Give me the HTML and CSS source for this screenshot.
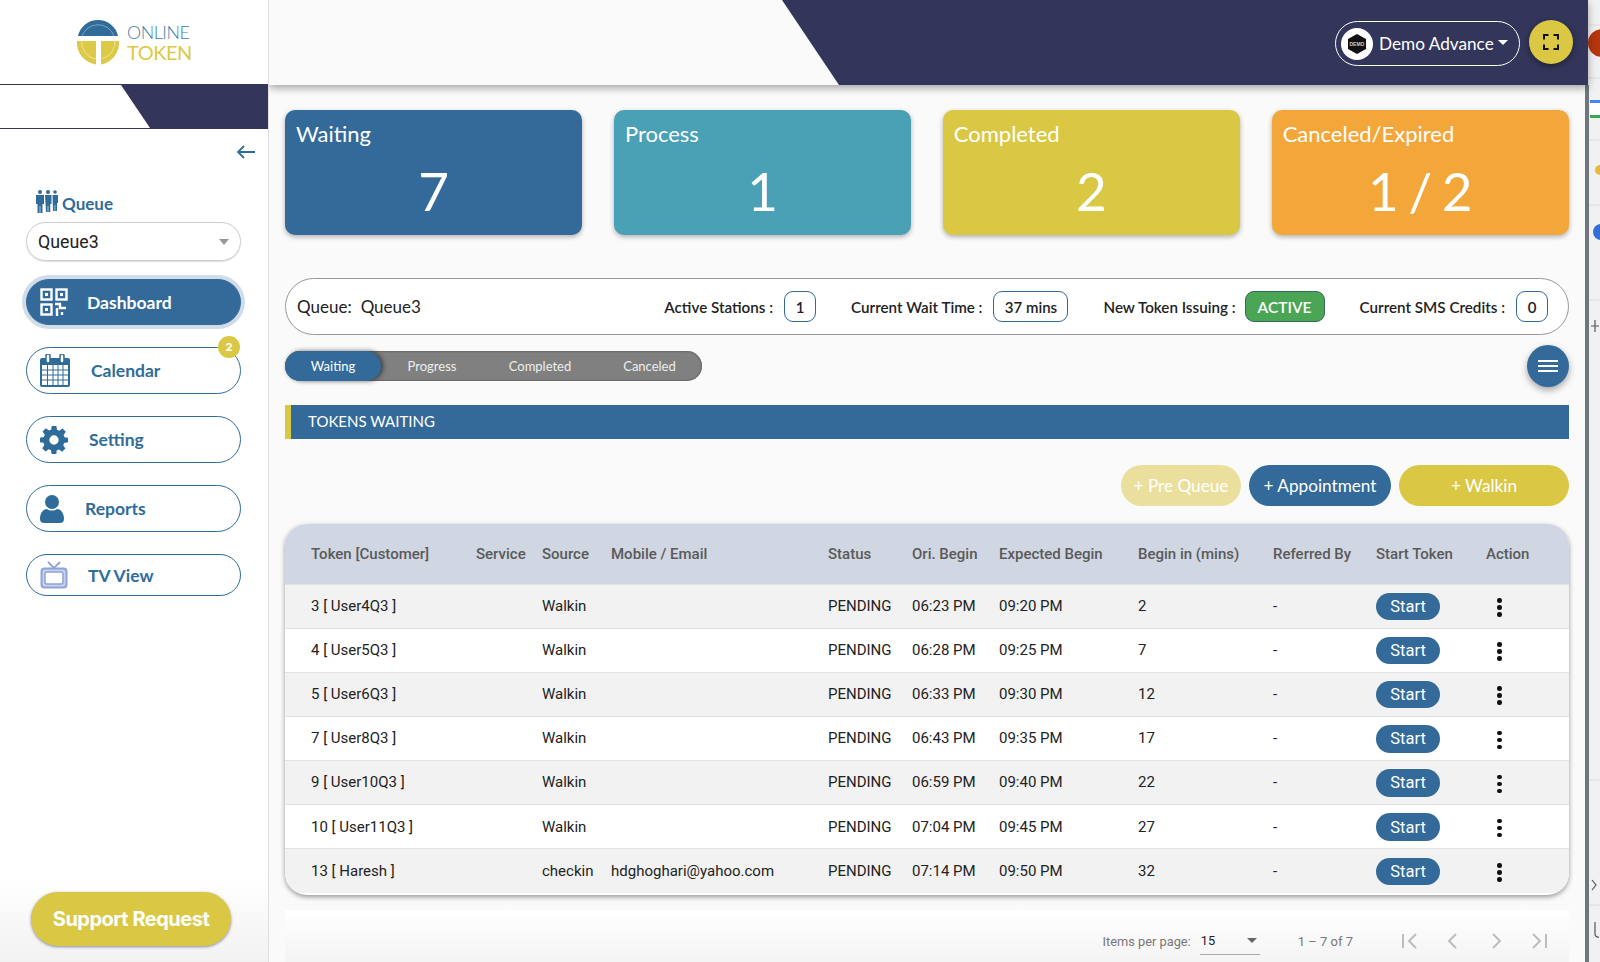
FILE: index.html
```html
<!DOCTYPE html>
<html lang="en">
<head>
<meta charset="utf-8">
<title>Online Token Dashboard</title>
<link rel="stylesheet" href="styles.css">
</head>
<body>
<aside class="sidebar">
  <div class="logo">
    <svg class="logo-mark" width="44" height="46" viewBox="0 0 44 46">
      <path d="M2 16 A20.5 20.5 0 0 1 42 16 Z" fill="#2f6c99"/>
      <path d="M6 16 A17 17 0 0 1 38 16" fill="none" stroke="#9dbcd2" stroke-width=".7"/>
      <path d="M1 21 H20 V44.5 A22 22 0 0 1 1 21 Z" fill="#dcc945"/>
      <path d="M25 21 H43 A22 22 0 0 1 25 44.5 Z" fill="#dcc945"/>
      <path d="M5.500 21 A17.500 17.500 0 0 0 20 39 M25 39 A17.500 17.500 0 0 0 39 21" fill="none" stroke="#f3eebd" stroke-width=".7"/>
    </svg>
    <div class="logo-text"><span class="logo-online">ONLINE</span><span class="logo-token">TOKEN</span></div>
  </div>
  <div class="strip"></div>
  <div class="collapse">
    <svg width="20" height="14" viewBox="0 0 20 14"><path d="M19 7H2M8 1 2 7l6 6" fill="none" stroke="#2f6c99" stroke-width="1.800"/></svg>
  </div>
  <div class="queue-label">
    <svg width="24" height="25" viewBox="0 0 24 25" fill="#2f6c99">
      <circle cx="5" cy="3" r="2"/><path d="M1 6h8v9H7.500v9H5.300v-7h-.6v7H2.500v-9H1z"/>
      <circle cx="13" cy="3" r="2"/><path d="M10 6h6.500v9h-1.200v8h-2v-6h-.6v6h-1.700z"/>
      <circle cx="20" cy="3" r="1.800"/><path d="M17.500 6H23v8h-1v8h-1.800v-6h-.5v6H18z"/>
    </svg>
    <span>Queue</span>
  </div>
  <div class="queue-select"><span>Queue3</span><i class="caret-grey"></i></div>
  <nav class="nav">
    <a class="nav-item active">
      <svg class="nav-icon qr" width="28" height="28" viewBox="0 0 28 28" fill="none" stroke="#fff" stroke-width="2.400">
        <rect x="1.500" y="1.500" width="10" height="10"/><rect x="16.500" y="1.500" width="10" height="10"/><rect x="1.500" y="16.500" width="10" height="10"/>
        <path d="M15 16h5v4h6M17 20v8M22 24v3" />
        <rect x="5" y="5" width="3" height="3" fill="#fff" stroke="none"/><rect x="20" y="5" width="3" height="3" fill="#fff" stroke="none"/><rect x="5" y="20" width="3" height="3" fill="#fff" stroke="none"/>
      </svg>
      <span class="nav-dash">Dashboard</span>
    </a>
    <a class="nav-item">
      <svg class="nav-icon cal" width="30" height="33" viewBox="0 0 30 33">
        <path d="M2 4h26a2 2 0 0 1 2 2v25a2 2 0 0 1-2 2H2a2 2 0 0 1-2-2V6a2 2 0 0 1 2-2z" fill="#2f6c99"/>
        <rect x="2" y="11" width="26" height="20" fill="#fff"/>
        <path d="M2 16h26M2 21h26M2 26h26M7.500 11v20M13 11v20M18 11v20M23 11v20" stroke="#2f6c99" stroke-width="1"/>
        <rect x="6" y="0" width="4" height="9" rx="2" fill="#fff" stroke="#2f6c99" stroke-width="1.500"/>
        <rect x="20" y="0" width="4" height="9" rx="2" fill="#fff" stroke="#2f6c99" stroke-width="1.500"/>
      </svg>
      <span class="nav-cal">Calendar</span>
      <b class="badge">2</b>
    </a>
    <a class="nav-item">
      <svg class="nav-icon gear" width="28" height="28" viewBox="0 0 24 24">
        <path fill="#2f6c99" fill-rule="evenodd" d="M10 0h4l.6 3.300 1.900.8L19.300 2.200l2.800 2.800-1.900 2.800.8 1.900L24 10v4l-3.300.6-.8 1.900 1.900 2.800-2.800 2.800-2.800-1.900-1.900.8L14 24h-4l-.6-3.300-1.900-.8-2.800 1.900-2.800-2.800 1.900-2.800-.8-1.900L0 14v-4l3.300-.6.8-1.900L2.200 4.700 5 1.900l2.800 1.900 1.900-.8zM12 8a4 4 0 1 0 0 8 4 4 0 0 0 0-8z"/>
      </svg>
      <span class="nav-set">Setting</span>
    </a>
    <a class="nav-item">
      <svg class="nav-icon user" width="24" height="28" viewBox="0 0 24 28" fill="#2f6c99">
        <circle cx="12" cy="7" r="7"/><path d="M0 24c0-7 4-10 7-10 1.500 1 3 1.500 5 1.500s3.500-.5 5-1.500c3 0 7 3 7 10 0 2.500-1.500 4-4 4H4c-2.500 0-4-1.500-4-4z"/>
      </svg>
      <span class="nav-rep">Reports</span>
    </a>
    <a class="nav-item short">
      <svg class="nav-icon tv" width="28" height="28" viewBox="0 0 28 28" fill="none" stroke="#8ea3d6">
        <rect x="1.500" y="7.500" width="25" height="19" rx="3" stroke-width="2" fill="#c7d2ec"/>
        <rect x="5" y="11" width="18" height="12" rx="2" fill="#fff" stroke-width="1.500"/>
        <path d="M8 1l6 6 6-6" stroke-width="1.800"/>
      </svg>
      <span class="nav-tv">TV View</span>
    </a>
  </nav>
  <button class="support">Support Request</button>
</aside>

<main class="main">
  <header class="topbar">
    <div class="account">
      <svg class="avatar" width="32" height="32" viewBox="0 0 32 32">
        <circle cx="16" cy="16" r="16" fill="#fff"/>
        <path d="M16 6l9 5v10l-9 5-9-5V11z" fill="#111"/>
        <text x="16" y="18" text-anchor="middle" class="avatar-text">DEMO</text>
      </svg>
      <span>Demo Advance</span>
      <i class="caret-white"></i>
    </div>
    <button class="fullscreen" aria-label="Fullscreen">
      <svg width="16" height="16" viewBox="0 0 16 16" fill="none" stroke="#111" stroke-width="2"><path d="M1 5.500V1h4.500M10.500 1H15v4.500M15 10.500V15h-4.500M5.500 15H1v-4.500"/></svg>
    </button>
  </header>

  <div class="content">
    <section class="cards">
      <div class="card c-blue"><div class="card-title">Waiting</div><div class="card-num">7</div></div>
      <div class="card c-teal"><div class="card-title">Process</div><div class="card-num">1</div></div>
      <div class="card c-yellow"><div class="card-title">Completed</div><div class="card-num">2</div></div>
      <div class="card c-orange"><div class="card-title">Canceled/Expired</div><div class="card-num">1 / 2</div></div>
    </section>

    <section class="info">
      <div class="info-queue"><span>Queue:</span><span>Queue3</span></div>
      <div class="info-item first"><label>Active Stations :</label><span class="box w-sm">1</span></div>
      <div class="info-item"><label>Current Wait Time :</label><span class="box w-md">37 mins</span></div>
      <div class="info-item"><label>New Token Issuing :</label><span class="status-active">ACTIVE</span></div>
      <div class="info-item"><label>Current SMS Credits :</label><span class="box w-sm">0</span></div>
    </section>

    <div class="tab-row">
      <div class="tabs">
        <span class="tab tab-1 on">Waiting</span>
        <span class="tab tab-2">Progress</span>
        <span class="tab tab-3">Completed</span>
        <span class="tab tab-4">Canceled</span>
      </div>
      <button class="fab" aria-label="Menu"><i></i><i></i><i></i></button>
    </div>

    <h2 class="section-title">TOKENS WAITING</h2>

    <div class="actions">
      <button class="act act-pre">+ Pre Queue</button>
      <button class="act act-app">+ Appointment</button>
      <button class="act act-walk">+ Walkin</button>
    </div>

    <div class="table-wrap">
      <table class="tokens">
        <thead>
          <tr><th>Token [Customer]</th><th>Service</th><th>Source</th><th>Mobile / Email</th><th>Status</th><th>Ori. Begin</th><th>Expected Begin</th><th>Begin in (mins)</th><th>Referred By</th><th>Start Token</th><th>Action</th></tr>
        </thead>
        <tbody>
          <tr><td>3 [ User4Q3 ]</td><td></td><td>Walkin</td><td></td><td>PENDING</td><td>06:23 PM</td><td>09:20 PM</td><td>2</td><td>-</td><td><button class="start">Start</button></td><td><span class="dots"><i></i><i></i><i></i></span></td></tr>
          <tr><td>4 [ User5Q3 ]</td><td></td><td>Walkin</td><td></td><td>PENDING</td><td>06:28 PM</td><td>09:25 PM</td><td>7</td><td>-</td><td><button class="start">Start</button></td><td><span class="dots"><i></i><i></i><i></i></span></td></tr>
          <tr><td>5 [ User6Q3 ]</td><td></td><td>Walkin</td><td></td><td>PENDING</td><td>06:33 PM</td><td>09:30 PM</td><td>12</td><td>-</td><td><button class="start">Start</button></td><td><span class="dots"><i></i><i></i><i></i></span></td></tr>
          <tr><td>7 [ User8Q3 ]</td><td></td><td>Walkin</td><td></td><td>PENDING</td><td>06:43 PM</td><td>09:35 PM</td><td>17</td><td>-</td><td><button class="start">Start</button></td><td><span class="dots"><i></i><i></i><i></i></span></td></tr>
          <tr><td>9 [ User10Q3 ]</td><td></td><td>Walkin</td><td></td><td>PENDING</td><td>06:59 PM</td><td>09:40 PM</td><td>22</td><td>-</td><td><button class="start">Start</button></td><td><span class="dots"><i></i><i></i><i></i></span></td></tr>
          <tr><td>10 [ User11Q3 ]</td><td></td><td>Walkin</td><td></td><td>PENDING</td><td>07:04 PM</td><td>09:45 PM</td><td>27</td><td>-</td><td><button class="start">Start</button></td><td><span class="dots"><i></i><i></i><i></i></span></td></tr>
          <tr><td>13 [ Haresh ]</td><td></td><td>checkin</td><td>hdghoghari@yahoo.com</td><td>PENDING</td><td>07:14 PM</td><td>09:50 PM</td><td>32</td><td>-</td><td><button class="start">Start</button></td><td><span class="dots"><i></i><i></i><i></i></span></td></tr>
        </tbody>
      </table>
    </div>

    <div class="paginator">
      <span class="pg-label">Items per page:</span>
      <div class="pg-select"><span>15</span><i class="caret-dark"></i></div>
      <span class="pg-range">1 – 7 of 7</span>
      <svg class="pg-icon" width="18" height="16" viewBox="0 0 18 16" fill="none" stroke="#bdbdbd" stroke-width="2"><path d="M2 1v14M15 1 8 8l7 7"/></svg>
      <svg class="pg-icon" width="18" height="16" viewBox="0 0 18 16" fill="none" stroke="#bdbdbd" stroke-width="2"><path d="M12 1 5 8l7 7"/></svg>
      <svg class="pg-icon" width="18" height="16" viewBox="0 0 18 16" fill="none" stroke="#bdbdbd" stroke-width="2"><path d="M6 1l7 7-7 7"/></svg>
      <svg class="pg-icon" width="18" height="16" viewBox="0 0 18 16" fill="none" stroke="#bdbdbd" stroke-width="2"><path d="M3 1l7 7-7 7M16 1v14"/></svg>
    </div>
  </div>
</main>

<div class="browser-edge">
  <svg width="15" height="962" viewBox="0 0 15 962">
    <rect width="15" height="962" fill="#f1f1f1"/>
    <rect width="4" height="962" y="85" fill="#6f7680"/>
    <circle cx="17" cy="43" r="14" fill="#b5360f"/>
    <path d="M4 25H15M4 78H15M4 140H15M4 205H15M4 300H15M4 780H15M4 905H15" stroke="#dcdcdc"/>
    <rect x="5" y="100" width="10" height="18" fill="#fff"/><rect x="5" y="100" width="10" height="3" fill="#4285f4"/><rect x="5" y="115" width="10" height="3" fill="#34a853"/>
    <circle cx="15" cy="170" r="5" fill="#e9b93a"/>
    <circle cx="16" cy="232" r="8" fill="#2f6fd6"/>
    <path d="M6 326H14M10 320V332" stroke="#555" stroke-width="1.200" fill="none"/>
    <path d="M7 880l4 5-4 5" stroke="#555" stroke-width="1.200" fill="none"/>
    <path d="M10 922v12a3 3 0 0 0 4 3" stroke="#555" stroke-width="1.200" fill="none"/>
  </svg>
</div>
</body>
</html>
```
FILE: styles.css
```css
* { box-sizing: border-box; }
html, body { margin: 0; height: 962px; overflow: hidden; }
body {
  display: flex;
  width: 1600px;
  background: #fafafa;
  font-family: "Lato", "Liberation Sans", sans-serif;
  color: #222;
}
button { font-family: inherit; border: 0; padding: 0; color: #fff; }

/* Sidebar */
.sidebar {
  position: relative;
  z-index: 2;
  width: 269px;
  height: 962px;
  flex: none;
  display: flex;
  flex-direction: column;
  background: linear-gradient(to bottom, #fff 91%, #f2f2f2 100%);
  border-right: 1px solid #dedede;
}
.logo {
  height: 84px;
  display: flex;
  align-items: center;
  padding: 0 0 0 76px;
  gap: 7px;
}
.logo-mark { flex: none; margin-top: 1px; }
.logo-text { display: flex; flex-direction: column; margin-top: 1px; }
.logo-online { font-size: 17.800px; font-weight: 300; color: #3f7eaa; letter-spacing: -.4px; line-height: 20px; }
.logo-token { font-size: 20px; color: #dcc945; letter-spacing: -.5px; line-height: 21px; }
.strip {
  height: 45px;
  position: relative;
  border-top: 1px solid #33355a;
  border-bottom: 1px solid #33355a;
  background: #fff;
}
.strip::after {
  content: "";
  position: absolute;
  inset: 0;
  background: #33355a;
  clip-path: polygon(121px 0, 100% 0, 100% 100%, 150px 100%);
}
.collapse { height: 24px; padding: 16px 0 0 236px; margin-bottom: 36px; line-height: 0; }
.queue-label {
  display: flex;
  align-items: flex-end;
  gap: 3px;
  padding-left: 35px;
  height: 25px;
  color: #2f6c99;
  font-size: 17px;
  font-weight: 700;
}
.queue-label span { line-height: 20px; }
.queue-select {
  margin: 8px 27px 0 26px;
  height: 39px;
  border: 1px solid #ccc;
  border-radius: 20px;
  box-shadow: 0 1px 1px #ddd;
  display: flex;
  align-items: center;
  justify-content: space-between;
  padding: 0 11px;
  font: 17.800px "Roboto", sans-serif;
  color: #222;
}
.caret-grey { width: 0; height: 0; border: 5.500px solid transparent; border-top: 6px solid #999; border-bottom: 0; }
.nav { margin-top: 18px; padding: 0 27px 0 26px; display: flex; flex-direction: column; gap: 22px; }
.nav-item {
  position: relative;
  height: 47px;
  display: flex;
  align-items: center;
  border: 1px solid #2f6c99;
  border-radius: 24px;
  padding-left: 13px;
  color: #2f6c99;
  font-size: 17.500px;
  font-weight: 700;
  background: #fff;
}
.nav-item.active { height: 46px; background: #336a9a; color: #fff; box-shadow: 0 0 0 4px #d0dce8; border-color: #336a9a; }
.nav-item.short { height: 42px; }
.nav-icon { flex: none; }
.nav-dash { margin-left: 19px; }
.nav-cal { margin-left: 21px; }
.nav-set { margin-left: 21px; }
.nav-rep { margin-left: 21px; }
.nav-tv { margin-left: 20px; }
.badge {
  position: absolute;
  top: -12px;
  right: 0;
  width: 22px;
  height: 22px;
  border-radius: 50%;
  background: #dac845;
  color: #fff;
  font-size: 12px;
  text-align: center;
  line-height: 22px;
}
.support {
  margin: auto 0 16px 31px;
  width: 200px;
  height: 54px;
  border-radius: 27px;
  background: #dac845;
  box-shadow: 0 1px 3px rgba(60,70,120,.6);
  font: 700 20px "Inter", sans-serif;
  letter-spacing: -.5px;
}

/* Main */
.main { width: 1316px; flex: none; display: flex; flex-direction: column; height: 962px; }
.topbar {
  position: relative;
  z-index: 1;
  height: 85px;
  flex: none;
  margin-right: -3px;
  background: #fafafa;
  box-shadow: 0 3px 8px rgba(0,0,0,.35);
  display: flex;
  align-items: center;
  justify-content: flex-end;
  gap: 9px;
  padding-right: 15px;
}
.topbar::before {
  content: "";
  position: absolute;
  inset: 0;
  background: #33355a;
  clip-path: polygon(513px 0, 100% 0, 100% 100%, 570px 100%);
}
.account {
  position: relative;
  height: 45px;
  width: 185px;
  margin-top: 2px;
  border: 1.500px solid #fff;
  border-radius: 23px;
  display: flex;
  align-items: center;
  padding-left: 5px;
  color: #fff;
  font-size: 17.200px;
  gap: 6px;
}
.avatar { flex: none; }
.avatar-text { font: 700 5px "Liberation Sans", sans-serif; fill: #ccc; }
.caret-white { width: 0; height: 0; border: 5px solid transparent; border-top: 5px solid #fff; border-bottom: 0; margin: -3px 0 0 -2px; }
.fullscreen {
  position: relative;
  width: 44px;
  height: 44px;
  margin-top: -1px;
  border-radius: 50%;
  background: #dac845;
  box-shadow: 0 2px 6px rgba(0,0,0,.4);
  display: flex;
  align-items: center;
  justify-content: center;
}
.content { padding: 25px 16px 0 16px; flex: 1; }

.cards { display: flex; gap: 31.500px; }
.card { flex: 1; height: 125px; border-radius: 10px; color: #fff; padding: 10px 11px; box-shadow: 0 2px 5px rgba(0,0,0,.3); }
.c-blue { background: #336a9a; }
.c-teal { background: #4aa0b5; }
.c-yellow { background: #dac845; }
.c-orange { background: #f3a73b; }
.card-title { font-size: 22px; line-height: 27px; }
.card-num { font-size: 53px; line-height: 60px; text-align: center; margin-top: 14px; word-spacing: -4px; }

.info {
  margin-top: 43px;
  height: 57px;
  border: 1px solid #999;
  border-radius: 29px;
  background: #fff;
  display: flex;
  align-items: center;
  padding: 0 20px 0 11px;
  gap: 35px;
  font-size: 15.200px;
  font-weight: 500;
}
.info-queue { font-size: 17px; font-weight: 400; display: flex; gap: 9px; }
.info-item { display: flex; align-items: center; gap: 11px; font-weight: 600; color: #222; }
.info-item.first { margin-left: auto; }
.box {
  height: 31px;
  border: 1px solid #336a9a;
  border-radius: 9px;
  background: #fff;
  display: flex;
  align-items: center;
  justify-content: center;
  font-size: 15px;
}
.w-sm { width: 32px; }
.w-md { width: 75px; }
.status-active {
  width: 80px;
  height: 31px;
  margin-left: -2px;
  border: 1px solid #336a5a;
  border-radius: 9px;
  background: #4aa654;
  color: #fff;
  font-weight: 600;
  display: flex;
  align-items: center;
  justify-content: center;
  font-size: 15.500px;
}

.tab-row { margin-top: 16px; height: 30px; display: flex; justify-content: space-between; align-items: center; }
.tabs { width: 417px; height: 30px; border-radius: 15px; background: #808080; display: flex; box-shadow: inset 0 0 2px #333; }
.tab { color: #eee; font-size: 13px; display: flex; align-items: center; justify-content: center; height: 30px; }
.tab-1 { width: 96px; }
.tab-2 { width: 102px; }
.tab-3 { width: 114px; }
.tab-4 { width: 105px; }
.tab.on { background: #336a9a; color: #fff; border-radius: 15px; box-shadow: 2px 0 5px rgba(0,0,0,.55); }
.fab {
  width: 42px;
  height: 42px;
  border-radius: 50%;
  background: #336a9a;
  box-shadow: 0 3px 7px rgba(0,0,0,.35);
  display: flex;
  flex-direction: column;
  align-items: center;
  justify-content: center;
  gap: 3px;
  flex: none;
}
.fab i { width: 20px; height: 2px; background: #fff; }

.section-title {
  margin: 24px 0 0;
  height: 34px;
  background: #336a9a;
  border-left: 6px solid #dac845;
  color: #fff;
  font-size: 15px;
  font-weight: 400;
  line-height: 33px;
  padding-left: 17px;
}
.actions { margin-top: 26px; display: flex; justify-content: flex-end; gap: 8px; }
.act { height: 41px; border-radius: 21px; font-size: 17.200px; padding-bottom: 1px; }
.act-pre { width: 120px; background: #ebdf9e; }
.act-app { width: 142px; background: #336a9a; }
.act-walk { width: 170px; background: #dac845; }

.table-wrap {
  margin-top: 18px;
  height: 371px;
  border-radius: 22px;
  overflow: hidden;
  box-shadow: 0 2px 5px rgba(0,0,0,.4);
  background: #fff;
}
.tokens { width: 100%; border-collapse: collapse; table-layout: fixed; font: 15px "Roboto", sans-serif; }
.tokens th { height: 60px; background: #d0d6e2; color: #5a5a5a; font-weight: 500; text-align: left; padding: 0; white-space: nowrap; }
.tokens td { height: 44.100px; padding: 0; color: #222; border-top: 1px solid #e2e2e2; white-space: nowrap; }
.tokens tbody tr:nth-child(odd) td { background: #f2f2f2; }
.tokens th:nth-child(1), .tokens td:nth-child(1) { width: 191px; padding-left: 26px; }
.tokens th:nth-child(2) { width: 66px; }
.tokens th:nth-child(3) { width: 69px; }
.tokens th:nth-child(4) { width: 217px; }
.tokens th:nth-child(5) { width: 84px; }
.tokens th:nth-child(6) { width: 87px; }
.tokens th:nth-child(7) { width: 139px; }
.tokens th:nth-child(8) { width: 135px; }
.tokens th:nth-child(9) { width: 103px; }
.tokens th:nth-child(10) { width: 110px; }
.start { width: 64px; height: 27.500px; margin-top: 1px; border-radius: 14px; background: #336a9a; font: 16.500px "Roboto", sans-serif; display: block; }
.dots { display: flex; flex-direction: column; gap: 2.500px; margin-left: 11px; width: 5px; padding-top: 3px; }
.dots i { width: 4.500px; height: 4.500px; border-radius: 50%; background: #111; }

.paginator {
  margin-top: 15px;
  height: 52px;
  background: linear-gradient(to bottom, #fff, #f4f4f4);
  display: flex;
  align-items: center;
  justify-content: flex-end;
  padding-right: 21px;
  color: #777;
  font: 12.800px "Roboto", sans-serif;
  padding-top: 10px;
}
.pg-select { width: 60px; height: 27px; margin-left: 9px; display: flex; align-items: center; justify-content: space-between; border-bottom: 1px solid #aaa; color: #222; padding: 0 3px 0 1px; }
.caret-dark { width: 0; height: 0; border: 5.500px solid transparent; border-top: 5px solid #666; border-bottom: 0; }
.pg-range { margin: 0 48px 0 38px; font-size: 13px; }
.pg-icon { margin-left: 25px; }
.pg-range + .pg-icon { margin-left: 0; }

.browser-edge { width: 15px; flex: none; line-height: 0; }
```
